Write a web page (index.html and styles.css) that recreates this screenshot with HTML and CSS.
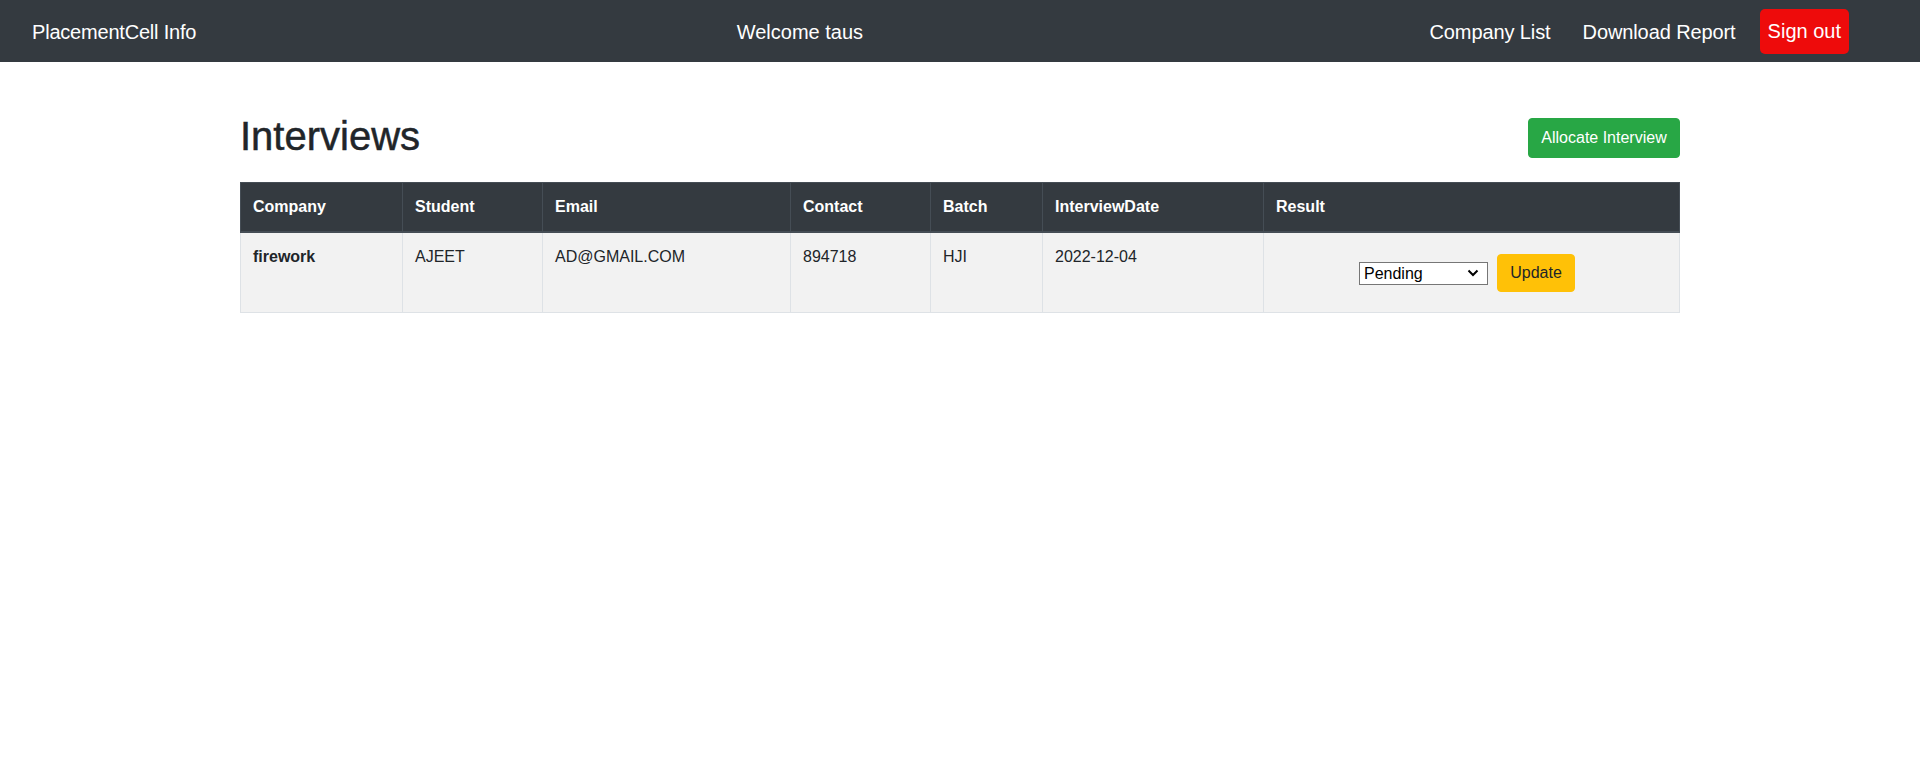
FILE: index.html
```html
<!DOCTYPE html>
<html lang="en">
<head>
<meta charset="utf-8">
<title>Interviews</title>
<link rel="stylesheet" href="styles.css">
</head>
<body>
<nav class="navbar">
  <a class="brand" href="#">PlacementCell Info</a>
  <span class="welcome">Welcome taus</span>
  <div class="nav-right">
    <a class="nav-link" href="#">Company List</a>
    <a class="nav-link" href="#">Download Report</a>
    <a class="signout" href="#">Sign out</a>
  </div>
</nav>
<main class="container">
  <div class="page-head">
    <h1 class="title">Interviews</h1>
    <a class="btn btn-green" href="#">Allocate Interview</a>
  </div>
  <table class="table">
    <colgroup>
      <col class="c-company"><col class="c-student"><col class="c-email"><col class="c-contact"><col class="c-batch"><col class="c-date"><col class="c-result">
    </colgroup>
    <thead>
      <tr>
        <th>Company</th>
        <th>Student</th>
        <th>Email</th>
        <th>Contact</th>
        <th>Batch</th>
        <th>InterviewDate</th>
        <th>Result</th>
      </tr>
    </thead>
    <tbody>
      <tr>
        <th class="row-head">firework</th>
        <td>AJEET</td>
        <td>AD@GMAIL.COM</td>
        <td>894718</td>
        <td>HJI</td>
        <td>2022-12-04</td>
        <td>
          <form class="result-form">
            <select class="result-select">
              <option selected>Pending</option>
              <option>Selected</option>
              <option>Not Selected</option>
              <option>Didn't Attempt</option>
            </select>
            <button type="button" class="btn btn-yellow">Update</button>
          </form>
        </td>
      </tr>
    </tbody>
  </table>
</main>
</body>
</html>
```
FILE: styles.css
```css
* { box-sizing: border-box; }
html, body { margin: 0; padding: 0; }
body {
  font-family: "Liberation Sans", Arial, sans-serif;
  font-size: 16px;
  line-height: 1.5;
  color: #212529;
  background: #fff;
}
a { text-decoration: none; }

.navbar {
  height: 62px;
  background: #343a40;
  display: flex;
  align-items: center;
  justify-content: space-between;
  padding: 1px 71px 0 32px;
  font-size: 20px;
  line-height: 30px;
}
.brand { color: #fff; letter-spacing: -0.2px; }
.welcome { color: #fff; margin-right: 10px; }
.nav-right { display: flex; align-items: center; }
.nav-link { color: #fff; padding: 0 16px; letter-spacing: -0.1px; }
.signout {
  color: #fff;
  background: #ee0b0b;
  padding: 7px 8px 8px;
  border-radius: 5px;
  margin-left: 8px;
}

.container {
  width: 1440px;
  margin: 0 auto;
  padding-top: 50px;
}
.page-head {
  display: flex;
  justify-content: space-between;
  align-items: center;
  margin-bottom: 22px;
}
.title {
  margin: 0;
  font-size: 40px;
  font-weight: 500;
  line-height: 48px;
  -webkit-text-stroke: 0.5px #212529;
}
.btn {
  display: inline-block;
  font-family: inherit;
  font-size: 16px;
  line-height: 24px;
  padding: 7px 12px;
  border: 1px solid transparent;
  border-radius: 4px;
  cursor: pointer;
}
.btn-green {
  background: #28a745;
  border-color: #28a745;
  color: #fff;
  margin-top: 4px;
  width: 152px;
  text-align: center;
}
.btn-yellow {
  background: #ffc107;
  border-color: #ffc107;
  color: #212529;
  width: 78px;
  height: 38px;
  padding: 0;
}

.table {
  width: 1439px;
  table-layout: fixed;
  border-collapse: collapse;
}
.c-company { width: 162px; }
.c-student { width: 140px; }
.c-email { width: 248px; }
.c-contact { width: 140px; }
.c-batch { width: 112px; }
.c-date { width: 221px; }
.c-result { width: 416px; }

.table th, .table td {
  padding: 12px;
  text-align: left;
  vertical-align: top;
}
.table thead th {
  background: #343a40;
  color: #fff;
  font-weight: 700;
  border: 1px solid #454d55;
  border-bottom: 2px solid #454d55;
  vertical-align: bottom;
}
.table tbody tr { background: #f2f2f2; }
.table tbody th, .table tbody td {
  border: 1px solid #dee2e6;
}
.row-head { font-weight: 700; }

.result-form {
  display: flex;
  justify-content: center;
  align-items: center;
  gap: 9px;
  margin: 9px 0 8px;
}
.result-select {
  -webkit-appearance: none;
  appearance: none;
  width: 129px;
  height: 23px;
  padding: 0 20px 0 4px;
  font-family: inherit;
  font-size: 16px;
  line-height: 21px;
  color: #000;
  background-color: #fff;
  background-image: url("data:image/svg+xml;utf8,<svg xmlns='http://www.w3.org/2000/svg' width='12' height='8' viewBox='0 0 12 8'><path d='M1.5 1.5 L6 6 L10.5 1.5' fill='none' stroke='black' stroke-width='2'/></svg>");
  background-repeat: no-repeat;
  background-position: right 8px center;
  background-size: 12px 8px;
  border: 1px solid #767676;
  border-radius: 0;
}
.result-form .btn-yellow { margin-right: 9px; }
```
